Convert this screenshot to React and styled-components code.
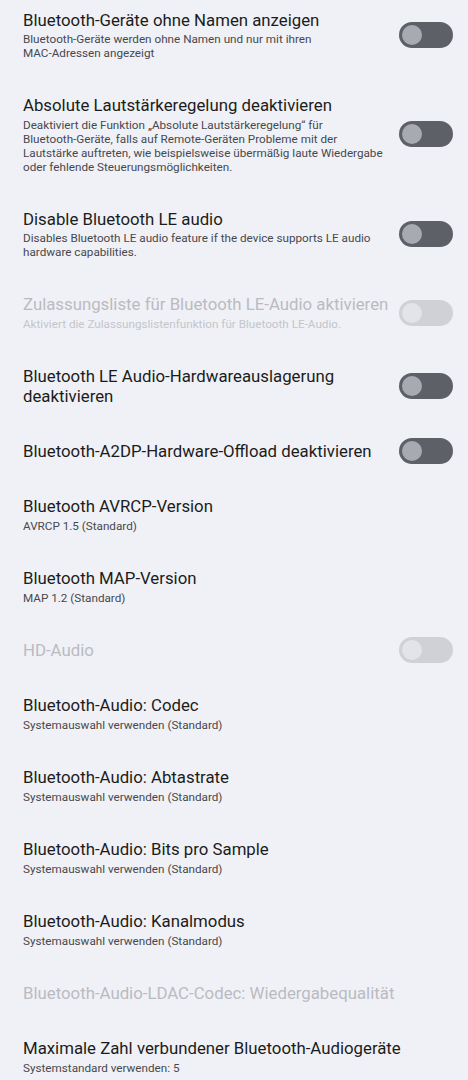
import styled, { createGlobalStyle } from 'styled-components';

const GlobalStyle = createGlobalStyle`
  body {
    margin: 0;
    background: #f0f1f6;
    font-family: Roboto, "Noto Sans", "Liberation Sans", sans-serif;
  }
`;

const items = [
  {
    title: 'Bluetooth-Geräte ohne Namen anzeigen',
    summary: 'Bluetooth-Geräte werden ohne Namen und nur mit ihren MAC-Adressen angezeigt',
    toggle: true,
  },
  {
    title: 'Absolute Lautstärkeregelung deaktivieren',
    summary:
      'Deaktiviert die Funktion „Absolute Lautstärkeregelung“ für Bluetooth-Geräte, falls auf Remote-Geräten Probleme mit der Lautstärke auftreten, wie beispielsweise übermäßig laute Wiedergabe oder fehlende Steuerungsmöglichkeiten.',
    toggle: true,
  },
  {
    title: 'Disable Bluetooth LE audio',
    summary: 'Disables Bluetooth LE audio feature if the device supports LE audio hardware capabilities.',
    toggle: true,
  },
  {
    title: 'Zulassungsliste für Bluetooth LE-Audio aktivieren',
    summary: 'Aktiviert die Zulassungslistenfunktion für Bluetooth LE-Audio.',
    toggle: true,
    disabled: true,
  },
  { title: 'Bluetooth LE Audio-Hardwareauslagerung deaktivieren', toggle: true },
  { title: 'Bluetooth-A2DP-Hardware-Offload deaktivieren', toggle: true },
  { title: 'Bluetooth AVRCP-Version', summary: 'AVRCP 1.5 (Standard)' },
  { title: 'Bluetooth MAP-Version', summary: 'MAP 1.2 (Standard)' },
  { title: 'HD-Audio', toggle: true, disabled: true },
  { title: 'Bluetooth-Audio: Codec', summary: 'Systemauswahl verwenden (Standard)' },
  { title: 'Bluetooth-Audio: Abtastrate', summary: 'Systemauswahl verwenden (Standard)' },
  { title: 'Bluetooth-Audio: Bits pro Sample', summary: 'Systemauswahl verwenden (Standard)' },
  { title: 'Bluetooth-Audio: Kanalmodus', summary: 'Systemauswahl verwenden (Standard)' },
  { title: 'Bluetooth-Audio-LDAC-Codec: Wiedergabequalität', disabled: true },
  { title: 'Maximale Zahl verbundener Bluetooth-Audiogeräte', summary: 'Systemstandard verwenden: 5' },
];

// android doesn't break lines at hyphens, so keep hyphenated words together
const keepHyphens = (text) =>
  text.split(' ').map((word, i) => (
    <span key={i}>
      {i > 0 && ' '}
      {word.includes('-') ? <Word>{word}</Word> : word}
    </span>
  ));

const App = () => {
  return (
    <>
      <GlobalStyle />
      <List>
        {items.map((item) => (
          <Row key={item.title}>
            <TextBlock $withSummary={!!item.summary}>
              <Title $disabled={item.disabled}>{keepHyphens(item.title)}</Title>
              {item.summary && <Summary $disabled={item.disabled}>{keepHyphens(item.summary)}</Summary>}
            </TextBlock>
            {item.toggle && (
              <Switch $disabled={item.disabled}>
                <Thumb $disabled={item.disabled} />
              </Switch>
            )}
          </Row>
        ))}
      </List>
    </>
  );
};

export default App;

const List = styled.div`
  display: flex;
  flex-direction: column;
  margin-top: -8px;
  width: 468px;
  height: 1088px;
  overflow: hidden;
`;

const Row = styled.div`
  flex-shrink: 0;
  display: flex;
  align-items: center;
  gap: 8px;
  padding: 0 15px 0 23px;
`;

const TextBlock = styled.div`
  flex: 1;
  min-width: 0;
  display: flex;
  flex-direction: column;
  justify-content: center;
  gap: 2.5px;
  padding: 17.5px 0;
  box-sizing: border-box;
  min-height: ${({ $withSummary }) => ($withSummary ? '72px' : '0')};
`;

const Word = styled.span`
  white-space: nowrap;
`;

const Title = styled.div`
  font-size: 16.8px;
  line-height: 20px;
  color: ${({ $disabled }) => ($disabled ? '#babbc1' : '#1b1c20')};
`;

const Summary = styled.div`
  font-size: 11.7px;
  line-height: 14px;
  color: ${({ $disabled }) => ($disabled ? '#c4c5cb' : '#47484e')};
`;

const Switch = styled.div`
  flex-shrink: 0;
  width: 54px;
  height: 26px;
  border-radius: 13px;
  background: ${({ $disabled }) => ($disabled ? '#d0d1d7' : '#5e6068')};
  display: flex;
  align-items: center;
  padding-left: 3px;
  box-sizing: border-box;
`;

const Thumb = styled.div`
  width: 20px;
  height: 20px;
  border-radius: 50%;
  background: ${({ $disabled }) => ($disabled ? '#e3e4ea' : '#a8aab3')};
`;
